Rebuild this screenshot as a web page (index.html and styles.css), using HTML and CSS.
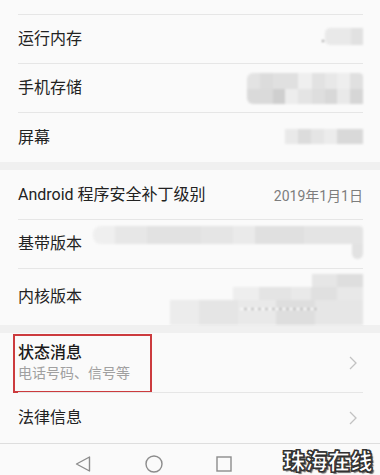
FILE: index.html
```html
<!DOCTYPE html>
<html lang="zh-CN">
<head>
<meta charset="utf-8">
<link rel="stylesheet" href="styles.css">
</head>
<body>
<div class="screen">
  <section class="group group-first">
    <div class="row row-line">
      <span class="title">运行内存</span>
      <span class="mosaic m-ram"><i class="dot"></i></span>
    </div>
    <div class="row row-line">
      <span class="title">手机存储</span>
      <span class="mosaic m-store"><i class="m-top"></i><i class="m-bot"></i></span>
    </div>
    <div class="row row-line row-last1">
      <span class="title">屏幕</span>
      <span class="mosaic m-screen"></span>
    </div>
  </section>
  <div class="band"></div>
  <section class="group">
    <div class="row">
      <span class="title">Android 程序安全补丁级别</span>
      <span class="value">2019年1月1日</span>
    </div>
    <div class="row row-line">
      <span class="title">基带版本</span>
      <span class="mosaic m-base"><i class="m-band"></i><i class="m-tail"></i></span>
    </div>
    <div class="row row-line row-kernel">
      <span class="title">内核版本</span>
      <span class="mosaic m-kernel"><i class="k1"></i><i class="k2"></i><i class="k3"><b class="k-line"></b></i></span>
    </div>
  </section>
  <div class="band"></div>
  <section class="group">
    <div class="row row-status">
      <div class="stack">
        <span class="title title-strong">状态消息</span>
        <span class="sub">电话号码、信号等</span>
      </div>
      <svg class="chev" width="8" height="14" viewBox="0 0 8 14"><polyline points="1,1 7,7 1,13" fill="none" stroke="#c2c2c2" stroke-width="1.3"/></svg>
      <div class="highlight"></div>
    </div>
    <div class="row row-line row-legal">
      <span class="title">法律信息</span>
      <svg class="chev" width="8" height="14" viewBox="0 0 8 14"><polyline points="1,1 7,7 1,13" fill="none" stroke="#c2c2c2" stroke-width="1.3"/></svg>
    </div>
  </section>
  <nav class="navbar">
    <svg class="nav-ico" width="16" height="16" viewBox="0 0 16 16"><polygon points="14.5,1 1.5,8 14.5,15" fill="none" stroke="#8c8c8c" stroke-width="1.4" stroke-linejoin="round"/></svg>
    <svg class="nav-ico" width="18" height="18" viewBox="0 0 18 18"><circle cx="9" cy="9" r="8" fill="none" stroke="#8c8c8c" stroke-width="1.4"/></svg>
    <svg class="nav-ico" width="16" height="16" viewBox="0 0 16 16"><rect x="1" y="1" width="14" height="14" fill="none" stroke="#8c8c8c" stroke-width="1.4"/></svg>
    <svg class="nav-ico" width="16" height="16" viewBox="0 0 16 16"><polyline points="2,5 8,11 14,5" fill="none" stroke="#8c8c8c" stroke-width="1.4"/></svg>
  </nav>
  <div class="watermark">珠海在线</div>
</div>
</body>
</html>
```

FILE: styles.css
```css
* { box-sizing: border-box; }
html, body { margin: 0; padding: 0; }
body {
  width: 380px;
  height: 475px;
  overflow: hidden;
  background: #fafafa;
  font-family: Roboto, "Noto Sans CJK SC", sans-serif;
}
.screen {
  position: relative;
  width: 380px;
  height: 475px;
  overflow: hidden;
  background: #fafafa;
}
.group {
  padding: 0 17px 0 18px;
  background: #fafafa;
}
.group-first { padding-top: 14px; }
.band { height: 8px; background: #f0f0f0; }
.row {
  position: relative;
  display: flex;
  align-items: center;
  justify-content: space-between;
  height: 49px;
}
.row-line { border-top: 1px solid #e6e6e6; }
.row-last1 { height: 50px; }
.row-kernel { height: 57px; }
.row-status { height: 59px; }
.row-legal { height: 51px; }
.title {
  font-size: 16px;
  color: #222;
  line-height: 20px;
  white-space: nowrap;
}
.title-strong { font-weight: 500; color: #1a1a1a; }
.value {
  font-size: 14px;
  color: #7d7d7d;
  white-space: nowrap;
}
.stack { display: flex; flex-direction: column; gap: 1px; padding-top: 1px; }
.sub { font-size: 14px; color: #a0a0a0; line-height: 19px; }
.chev { margin-right: 6px; }
.highlight {
  position: absolute;
  left: -5px;
  top: 1px;
  width: 139px;
  height: 59px;
  border: 2px solid #cc3b3e;
}

/* blurred values */
.mosaic { display: block; position: relative; filter: blur(0.8px); }
.mosaic i, .mosaic b { display: block; }
.m-ram {
  width: 38px; height: 17px; margin-top: -6px;
  border-radius: 5px 0 0 5px;
  background: linear-gradient(90deg, #e9e9e9 0 68%, #e1e1e1 68% 100%);
}
.m-ram .dot {
  position: absolute; left: -3px; top: 12px;
  width: 2px; height: 2px; background: #9a9a9a;
}
.m-store { width: 116px; height: 31px; }
.m-store .m-top {
  height: 16px; border-radius: 6px 4px 0 0;
  background: linear-gradient(90deg,
    #e3e3e3 0 11%, #dcdcdc 11% 22%, #e0e0e0 22% 44%, #efefef 44% 56%,
    #e2e2e2 56% 67%, #e8e8e8 67% 78%, #eeeeee 78% 89%, #e0e0e0 89% 100%);
}
.m-store .m-bot {
  height: 15px; border-radius: 0 0 0 6px;
  background: linear-gradient(90deg,
    #dadada 0 22%, #cfcfcf 22% 33%, #ededed 33% 44%, #e4e4e4 44% 56%,
    #dedede 56% 67%, #d8d8d8 67% 78%, #e9e9e9 78% 89%, #d6d6d6 89% 100%);
}
.m-screen {
  width: 78px; height: 15px; margin-top: -3px;
  background: linear-gradient(90deg,
    #e9e9e9 0 17%, #dcdcdc 17% 33%, #e5e5e5 33% 50%, #ececec 50% 67%, #d9d9d9 67% 100%);
}
.m-base { width: 270px; height: 33px; margin-top: -4px; }
.m-base .m-band {
  height: 18px; border-radius: 8px 4px 0 8px;
  background: linear-gradient(90deg,
    #efefef 0 8%, #e7e7e7 8% 20%, #e2e2e2 20% 40%, #e5e5e5 40% 52%,
    #eaeaea 52% 60%, #e0e0e0 60% 78%, #e4e4e4 78% 100%);
}
.m-base .m-tail {
  margin-left: auto; width: 11px; height: 15px;
  border-radius: 0 0 6px 6px; background: #e2e2e2;
}
.m-kernel {
  width: 193px; height: 51px; margin-top: 4px;
  display: flex; flex-direction: column; align-items: flex-end;
}
.m-kernel .k1 {
  width: 51px; height: 13px;
  background: linear-gradient(90deg, #e6e6e6 0 50%, #dedede 50% 100%);
}
.m-kernel .k2 {
  width: 130px; height: 13px;
  background: linear-gradient(90deg, #eeeeee 0 20%, #e4e4e4 20% 45%, #e9e9e9 45% 60%, #e0e0e0 60% 80%, #e8e8e8 80% 100%);
}
.m-kernel .k3 {
  position: relative;
  width: 193px; height: 25px;
  background: linear-gradient(90deg, #ececec 0 15%, #e5e5e5 15% 35%, #e9e9e9 35% 55%, #dedede 55% 75%, #e6e6e6 75% 100%);
}
.m-kernel .k-line {
  position: absolute; left: 70px; top: 8px;
  width: 78px; height: 2px;
  background: repeating-linear-gradient(90deg, #fafafa 0 4px, #bdbdbd 4px 7px);
}

.navbar {
  display: flex;
  align-items: center;
  gap: 55px;
  height: 40px;
  padding-left: 75px;
  border-top: 1px solid #dedede;
  background: #fafafa;
}
.navbar .nav-ico:nth-child(2) { margin-left: -1px; margin-right: -2px; }
.watermark {
  position: absolute;
  left: 283px;
  top: 443px;
  font-family: "Noto Sans CJK SC", sans-serif;
  font-weight: 900;
  font-size: 22px;
  letter-spacing: 0.5px;
  color: #ffffff;
  -webkit-text-stroke: 1px #2c2c2c;
  text-shadow: 1px 1px 0 #3a3a3a, -1px -1px 0 #3a3a3a, 1px -1px 0 #3a3a3a, -1px 1px 0 #3a3a3a, 2px 2px 1px #666;
}
```
